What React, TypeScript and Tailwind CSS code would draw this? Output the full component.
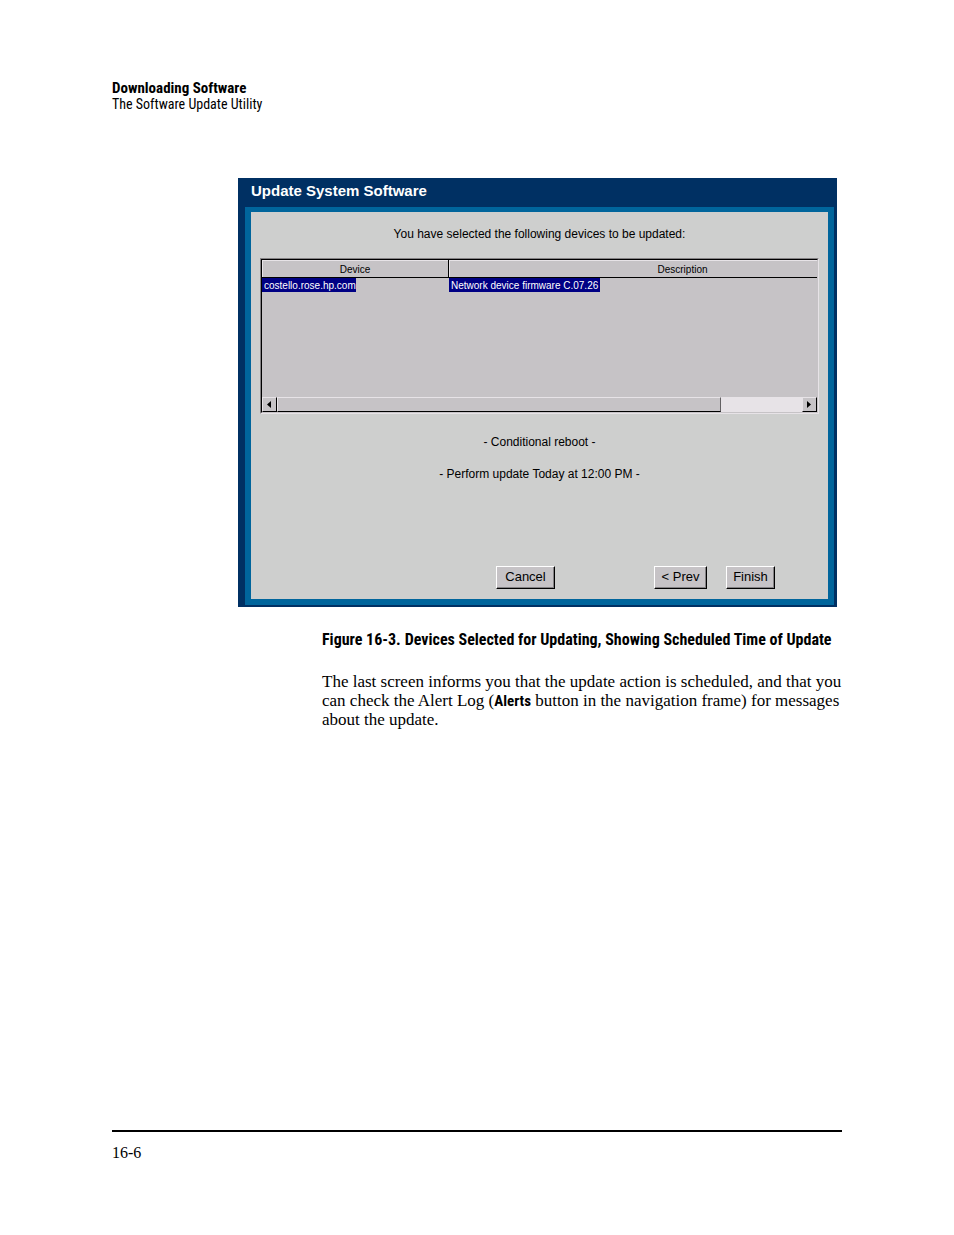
import type { ReactNode } from "react";

const condensed = "font-['Roboto_Condensed','Liberation_Sans_Narrow','Liberation_Sans',sans-serif]";

function DialogButton({ children, className }: { children: ReactNode; className: string }) {
  return (
    <button
      type="button"
      className={`flex h-[23px] items-center justify-center border border-t-white border-r-black border-b-black border-l-white bg-[#c6c3c6] pb-px text-[13px] leading-4 shadow-[inset_-1px_-1px_0_#848284] ${className}`}
    >
      {children}
    </button>
  );
}

function DeviceTable() {
  return (
    <div className="mx-[9px] border border-t-[#848284] border-r-[#e7e3e7] border-b-[#e7e3e7] border-l-[#848284]">
      <div className="border border-t-black border-r-[#c6c3c6] border-b-[#c6c3c6] border-l-black bg-[#c6c3c6]">
        <div className="h-[137px]">
          <table className="w-full table-fixed border-separate border-spacing-0 text-[10px] leading-[14px]">
            <thead>
              <tr className="h-[18px]">
                <th
                  scope="col"
                  className="w-[187px] border-r border-b border-black p-0 pt-0.5 text-center font-normal shadow-[inset_1px_1px_0_#e7e3e7]"
                >
                  Device
                </th>
                <th
                  scope="col"
                  className="border-b border-black p-0 pt-0.5 pl-[99px] text-center font-normal shadow-[inset_1px_1px_0_#e7e3e7]"
                >
                  Description
                </th>
              </tr>
            </thead>
            <tbody className="leading-3 text-white">
              <tr>
                <td className="p-0">
                  <span className="block w-[94px] bg-[#000084] pt-0.5 pl-0.5 whitespace-nowrap">costello.rose.hp.com</span>
                </td>
                <td className="p-0">
                  <span className="block w-[151px] bg-[#000084] pt-0.5 pl-0.5 whitespace-nowrap">
                    Network device firmware C.07.26
                  </span>
                </td>
              </tr>
            </tbody>
          </table>
        </div>
        <div className="flex h-[15px] bg-[#e7e3e7]">
          <button
            type="button"
            aria-label="Scroll left"
            className="flex w-[15px] items-center justify-center border border-t-[#e7e3e7] border-r-black border-b-black border-l-[#e7e3e7] bg-[#c6c3c6] pr-px"
          >
            <svg width="4" height="7" viewBox="0 0 4 7" aria-hidden="true">
              <path d="M4 0v7L0 3.5z" />
            </svg>
          </button>
          <div className="w-[444px] border border-t-[#e7e3e7] border-r-[#636163] border-b-black border-l-[#e7e3e7] bg-[#c6c3c6]" />
          <button
            type="button"
            aria-label="Scroll right"
            className="ml-auto flex w-[15px] items-center justify-center border border-t-[#e7e3e7] border-r-black border-b-black border-l-[#e7e3e7] bg-[#c6c3c6] pr-px"
          >
            <svg width="4" height="7" viewBox="0 0 4 7" aria-hidden="true">
              <path d="M0 0v7l4-3.5z" />
            </svg>
          </button>
        </div>
      </div>
    </div>
  );
}

function UpdateDialog() {
  return (
    <section className="bg-[#003063] pr-[3px] pb-0.5 pl-[7px] font-['Liberation_Sans',sans-serif] text-black">
      <h1 className="h-[29px] pt-1 pl-1.5 text-[15px] leading-[18px] font-bold text-white">
        Update System Software
      </h1>
      <div className="border-6 border-t-5 border-[#00659c] bg-[#cecfce] pt-3.5 pb-2.5">
        <p className="mb-4 text-center text-[12px] leading-4">
          You have selected the following devices to be updated:
        </p>
        <DeviceTable />
        <div className="mt-5 flex flex-col gap-4 text-center text-[12px] leading-4">
          <p>- Conditional reboot -</p>
          <p>- Perform update Today at 12:00 PM -</p>
        </div>
        <div className="mt-[84px] flex justify-end pr-[53px]">
          <DialogButton className="mr-[99px] w-[59px]">Cancel</DialogButton>
          <DialogButton className="mr-[19px] w-[53px]">&lt; Prev</DialogButton>
          <DialogButton className="w-[49px]">Finish</DialogButton>
        </div>
      </div>
    </section>
  );
}

export default function App() {
  return (
    <div className="flex min-h-screen flex-col bg-white px-28 pt-20 pb-[73px] font-['Liberation_Serif',serif] text-black">
      <header className={`leading-4 ${condensed}`}>
        <p className="text-[15px] leading-4 font-bold">Downloading Software</p>
        <p className="text-[14px] leading-4">The Software Update Utility</p>
      </header>
      <main className="mt-[66px] mr-[5px] ml-[126px] flex-1">
        <figure>
          <UpdateDialog />
          <figcaption className={`mt-[25px] -mr-[5px] pl-[84px] text-[16px] leading-4 font-bold whitespace-nowrap ${condensed}`}>
            <span className="mr-1">Figure 16-3.</span>
            <span>Devices Selected for Updating, Showing Scheduled Time of Update</span>
          </figcaption>
        </figure>
        <p className="mt-6 -mr-[5px] pl-[84px] text-[17px] leading-[19px] whitespace-nowrap">
          The last screen informs you that the update action is scheduled, and that you
          <br />
          can check the Alert Log (<b className={`text-[15px] leading-4 ${condensed}`}>Alerts</b> button in the navigation frame) for messages
          <br />
          about the update.
        </p>
      </main>
      <footer className="border-t-2 border-black pt-[11px] text-[16px] leading-[19px]">16-6</footer>
    </div>
  );
}
